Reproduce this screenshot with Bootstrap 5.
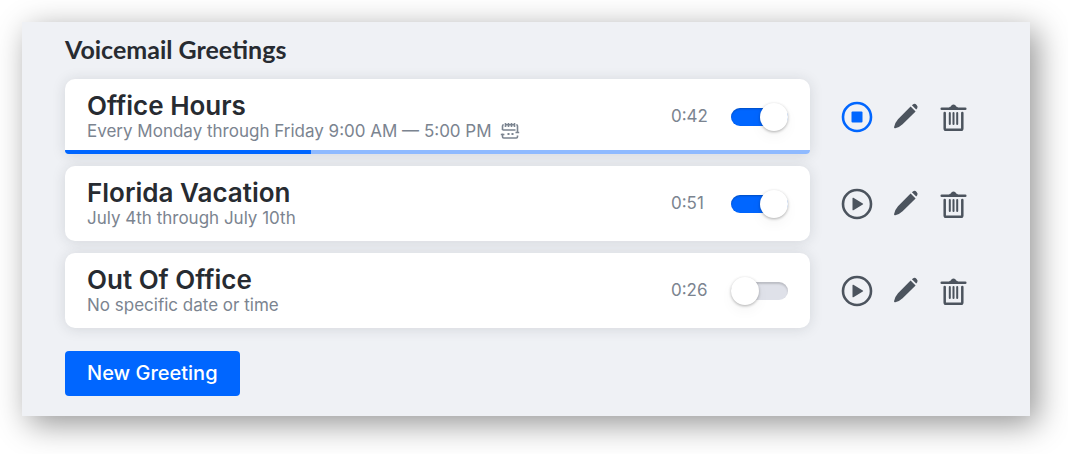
<!DOCTYPE html>
<html lang="en">
<head>
<meta charset="utf-8">
<meta name="viewport" content="width=device-width, initial-scale=1">
<title>Voicemail Greetings</title>
<link rel="stylesheet" href="https://cdn.jsdelivr.net/npm/bootstrap@5.3.0/dist/css/bootstrap.min.css">
<style>
  :root { --brand: #0066ff; --ink: #272b31; --muted: #7b8490; --icon: #4c545e; }
  body { background: #fff; font-family: Inter, "Liberation Sans", sans-serif; color: var(--ink); }
  .panel { margin: 22px 38px 38px 22px; padding: 11px 61px 20px 43px; background: #eff1f5; box-shadow: 7px 8px 30px rgba(0,0,0,.42); }
  .panel-title { font: 700 25px/32px Lato, "Liberation Sans", sans-serif; margin-bottom: 14px; }
  .greetings { gap: 12px; margin-bottom: 23px; }
  .greeting-card { height: 75px; padding: 0 22px; border: 0; border-radius: 10px; box-shadow: 0 1px 14px rgba(30,35,45,.13); }
  .greeting-name { font-size: 26px; line-height: 28px; font-weight: 600; margin: 0; }
  .greeting-when { font-size: 17px; line-height: 22px; color: var(--muted); margin: 0; gap: 8px; }
  .duration { width: 60px; font-size: 17px; color: var(--muted); }
  .playback { height: 4px; background: #8fbaff; border-radius: 0 0 4px 4px; }
  .playback .progress-bar { background: var(--brand); }
  .playing { border-radius: 10px 10px 4px 4px; }
  .form-check-input.toggle { position: relative; width: 57px; height: 18px; margin: 0; border: 0; border-radius: 9px; background: #dfe1e9; box-shadow: inset 0 2px 2px rgba(0,0,0,.16); cursor: pointer; }
  .form-check-input.toggle:checked { background: var(--brand); box-shadow: inset 0 1px 2px rgba(0,0,0,.25); }
  .toggle::before { content: ""; position: absolute; left: 0; top: -5px; width: 28px; height: 28px; border-radius: 50%; background: #fff; box-shadow: 0 1px 3px rgba(0,0,0,.3), 0 6px 14px rgba(0,0,0,.04); }
  .toggle:checked::before { left: auto; right: 0; }
  .actions { gap: 16px; margin-left: 31px; }
  .icon-btn { width: 32px; height: 32px; padding: 0; border: 0; color: var(--icon); line-height: 0; }
  .icon-btn svg { width: 32px; height: 32px; }
  .icon-btn.stop { color: var(--brand); }
  .new-greeting { padding: 8px 22px; border: 0; border-radius: 4px; background: var(--brand); color: #fff; font-size: 20px; line-height: 29px; font-weight: 500; }
</style>
</head>
<body>
<svg class="d-none" aria-hidden="true">
  <symbol id="play" viewBox="0 0 32 32"><circle cx="16" cy="16" r="14" fill="none" stroke="currentColor" stroke-width="2.6"/><path d="M11.500 10.300v11.400q0 1 .9.500l9.400-5.600q.9-.6 0-1.200l-9.400-5.600q-.9-.5-.9.500z" fill="currentColor"/></symbol>
  <symbol id="stop" viewBox="0 0 32 32"><circle cx="16" cy="16" r="14" fill="none" stroke="currentColor" stroke-width="2.6"/><rect x="10.500" y="10.500" width="11" height="11" rx="1" fill="currentColor"/></symbol>
  <symbol id="pencil" viewBox="0 0 32 32"><path d="M21.600 5.400l5 5L13.600 23.200Q10.500 26.200 6.300 27.200Q4.800 27.500 5.100 26Q6.100 21.500 9 18.300ZM22.900 4.300l1-.9q1.900-1.300 3.700.5q1.800 1.800.5 3.600l-.9 1.100Z" fill="currentColor"/></symbol>
  <symbol id="trash" viewBox="0 0 32 32"><path d="M4.700 7.700H28.300M7.700 12V27.500q0 1.300 1.300 1.300H24q1.300 0 1.300-1.300V12" fill="none" stroke="currentColor" stroke-width="2.500" stroke-linecap="round"/><path d="M12.800 12v11M16.500 12v11M20.200 12v11" fill="none" stroke="currentColor" stroke-width="2" stroke-linecap="round"/><path d="M12 7q.3-1.400 1.800-1.500q.7-2 2.700-2t2.700 2q1.500.1 1.800 1.500z" fill="currentColor"/></symbol>
</svg>
<main class="panel">
  <h1 class="panel-title">Voicemail Greetings</h1>
  <div class="greetings d-flex flex-column">
    <section class="d-flex align-items-center">
      <div class="card greeting-card playing flex-row flex-grow-1 align-items-center">
        <div class="flex-grow-1">
          <h2 class="greeting-name">Office Hours</h2>
          <p class="greeting-when d-flex align-items-center">Every Monday through Friday 9:00 AM — 5:00 PM
            <svg width="20" height="18" viewBox="0 0 20 18" fill="none" stroke="currentColor" stroke-width="1.600" stroke-linejoin="round" aria-hidden="true"><path d="M2.500 8V4q0-1.200 1.200-1.200M16.300 2.800q1.200 0 1.200 1.200v7M2.500 8h13M5.500 1v4M8.500 1v4M11.500 1v4M14.500 1v4M5.500 2.800h9"/><path d="M2.500 11.500v3.300q0 1.200 1.200 1.200h12.600q1.200 0 1.200-1.200V13.500M.8 12.500h3.600M15.500 10.500h3.700"/><path d="M7.500 12h2M11.500 12h2" stroke-width="2"/></svg>
          </p>
        </div>
        <span class="duration">0:42</span>
        <input class="form-check-input toggle" type="checkbox" role="switch" aria-label="Office Hours enabled" checked>
        <div class="progress playback position-absolute bottom-0 start-0 w-100" role="progressbar" aria-label="Playback" aria-valuenow="33" aria-valuemin="0" aria-valuemax="100"><div class="progress-bar" style="width:33%"></div></div>
      </div>
      <div class="actions d-flex">
        <button class="btn icon-btn stop" type="button" aria-label="Stop"><svg><use href="#stop"/></svg></button>
        <button class="btn icon-btn" type="button" aria-label="Edit"><svg><use href="#pencil"/></svg></button>
        <button class="btn icon-btn" type="button" aria-label="Delete"><svg><use href="#trash"/></svg></button>
      </div>
    </section>
    <section class="d-flex align-items-center">
      <div class="card greeting-card flex-row flex-grow-1 align-items-center">
        <div class="flex-grow-1">
          <h2 class="greeting-name">Florida Vacation</h2>
          <p class="greeting-when">July 4th through July 10th</p>
        </div>
        <span class="duration">0:51</span>
        <input class="form-check-input toggle" type="checkbox" role="switch" aria-label="Florida Vacation enabled" checked>
      </div>
      <div class="actions d-flex">
        <button class="btn icon-btn" type="button" aria-label="Play"><svg><use href="#play"/></svg></button>
        <button class="btn icon-btn" type="button" aria-label="Edit"><svg><use href="#pencil"/></svg></button>
        <button class="btn icon-btn" type="button" aria-label="Delete"><svg><use href="#trash"/></svg></button>
      </div>
    </section>
    <section class="d-flex align-items-center">
      <div class="card greeting-card flex-row flex-grow-1 align-items-center">
        <div class="flex-grow-1">
          <h2 class="greeting-name">Out Of Office</h2>
          <p class="greeting-when">No specific date or time</p>
        </div>
        <span class="duration">0:26</span>
        <input class="form-check-input toggle" type="checkbox" role="switch" aria-label="Out Of Office enabled">
      </div>
      <div class="actions d-flex">
        <button class="btn icon-btn" type="button" aria-label="Play"><svg><use href="#play"/></svg></button>
        <button class="btn icon-btn" type="button" aria-label="Edit"><svg><use href="#pencil"/></svg></button>
        <button class="btn icon-btn" type="button" aria-label="Delete"><svg><use href="#trash"/></svg></button>
      </div>
    </section>
  </div>
  <button class="btn btn-primary new-greeting" type="button">New Greeting</button>
</main>
<script src="https://cdn.jsdelivr.net/npm/bootstrap@5.3.0/dist/js/bootstrap.bundle.min.js"></script>
</body>
</html>
